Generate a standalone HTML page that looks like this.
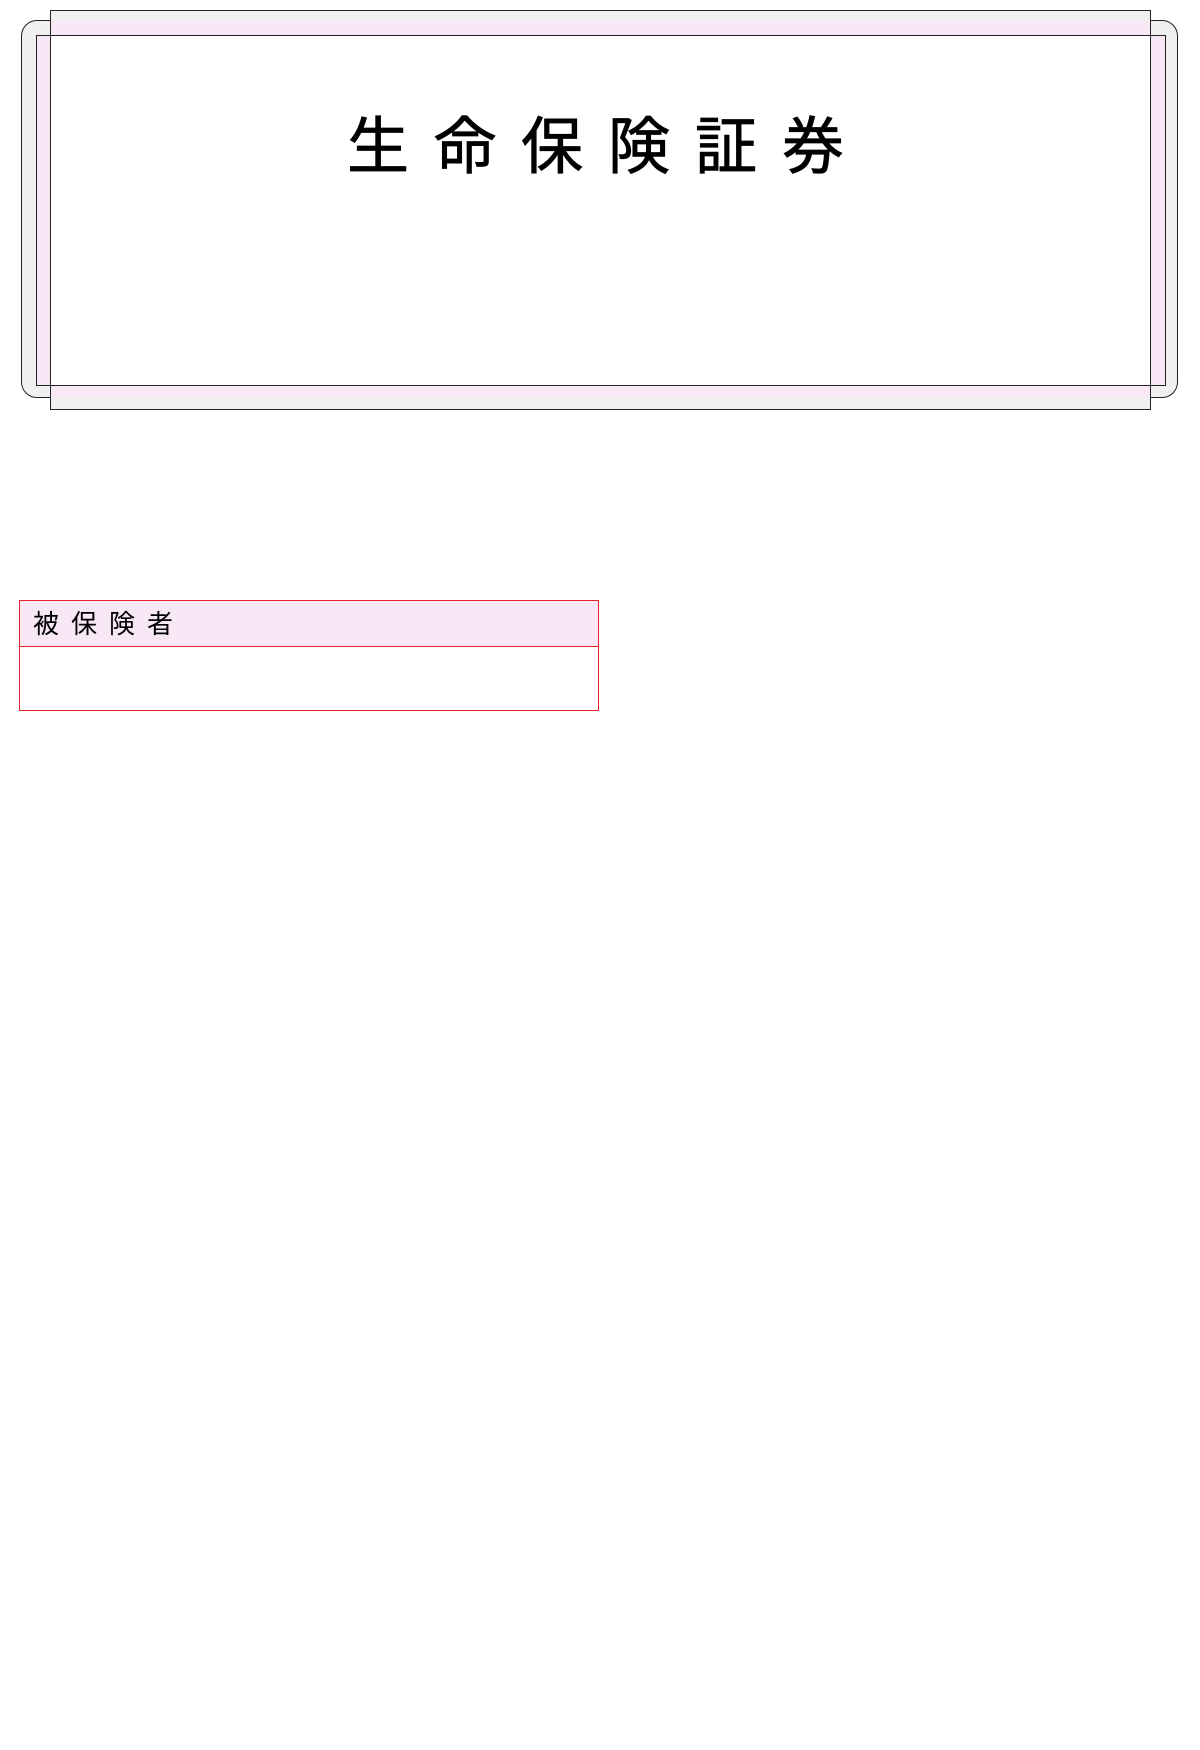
<!DOCTYPE html>
<html><head><meta charset="utf-8"><style>
body{margin:0;width:1200px;height:1750px;background:#fff;position:relative;font-family:"Liberation Sans","Noto Sans CJK JP",sans-serif;}
div{position:absolute;box-sizing:border-box;}
</style></head><body>
<div style="left:21px;top:20px;width:1157px;height:378px;background:#f0f0f0;border:1px solid #222;border-radius:16px;"></div>
<div style="left:50px;top:10px;width:1101px;height:400px;background:#f0f0f0;"></div>
<div style="left:50px;top:21px;width:1101px;height:376px;background:#f8e8f6;"></div>
<div style="left:36px;top:35px;width:1130px;height:351px;background:#f8e8f6;"></div>
<div style="left:50px;top:35px;width:1101px;height:351px;background:#fff;"></div>
<div style="left:50px;top:10px;width:1101px;height:400px;border:1px solid #222;"></div>
<div style="left:36px;top:35px;width:1130px;height:351px;border:1px solid #222;"></div>
<div style="left:0;width:1200px;top:113px;text-align:center;font-size:62px;line-height:70px;letter-spacing:25px;padding-left:16px;color:#000;-webkit-text-stroke:0.8px #000;">生命保険証券</div>
<div style="left:19px;top:600px;width:580px;height:111px;border:1px solid #e8202a;"></div>
<div style="left:20px;top:601px;width:578px;height:46px;background:#f8e8f6;border-bottom:1px solid #e8202a;font-size:26px;line-height:46px;padding-left:13px;letter-spacing:12px;color:#000;">被保険者</div>
</body></html>
